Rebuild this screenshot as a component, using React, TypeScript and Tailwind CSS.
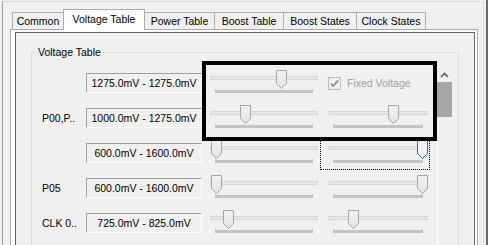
import React from 'react';

type Row = {
  label: string;
  range: string;
  a: number;
  b: number | null;
  focused?: boolean;
};

const rows: Row[] = [
  { label: '', range: '1275.0mV - 1275.0mV', a: 66, b: null },
  { label: 'P00,P..', range: '1000.0mV - 1275.0mV', a: 30, b: 60 },
  { label: '', range: '600.0mV - 1600.0mV', a: 1, b: 89, focused: true },
  { label: 'P05', range: '600.0mV - 1600.0mV', a: 1, b: 89 },
  { label: 'CLK 0..', range: '725.0mV - 825.0mV', a: 13, b: 20 },
];

const tabs = [
  { label: 'Common', w: 52 },
  { label: 'Voltage Table', w: 82, selected: true },
  { label: 'Power Table', w: 71 },
  { label: 'Boost Table', w: 70 },
  { label: 'Boost States', w: 74 },
  { label: 'Clock States', w: 70 },
];

function Thumb({ x, blue }: { x: number; blue?: boolean }) {
  return (
    <svg className="absolute top-0" style={{ left: x }} width="11" height="19" viewBox="0 0 11 19">
      <defs>
        <linearGradient id="thumbFill" x1="0" y1="0" x2="0" y2="1">
          <stop offset="0" stopColor="#f2f2f2" />
          <stop offset="1" stopColor="#e2e2e2" />
        </linearGradient>
      </defs>
      <path
        d="M0.5 0.5H10.5V13.5L5.5 18.5L0.5 13.5Z"
        fill={blue ? '#eef3f8' : 'url(#thumbFill)'}
        stroke={blue ? '#0078d7' : '#a6a6a6'}
      />
    </svg>
  );
}

function TrackBar({ width, pos, blue, className }: { width: number; pos: number; blue?: boolean; className: string }) {
  return (
    <div className={className} style={{ width }}>
      <div className="mt-[6px] h-[4px] border border-[#d6d6d6] bg-[#e7e7e7]" />
      <div className="mt-[9px] mx-[5px] h-[4px] flex items-end">
        <div className="w-[1px] h-[4px] bg-[#c4c4c4]" />
        <div className="flex-1 h-[3px] bg-[#c4c4c4]" />
        <div className="w-[1px] h-[4px] bg-[#c4c4c4]" />
      </div>
      <Thumb x={pos} blue={blue} />
    </div>
  );
}

function FixedVoltage() {
  return (
    <div className="ml-[10px] w-[100px] mt-[7px] flex items-center gap-[6px] text-[#a0a0a0] whitespace-nowrap">
      <svg width="13" height="13" viewBox="0 0 13 13">
        <rect x="0.5" y="0.5" width="12" height="12" fill="#f0f0f0" stroke="#bcbcbc" />
        <path d="M2.8 6.6L5.2 9.1L10.2 3.4" fill="none" stroke="#8c8c8c" strokeWidth="1.7" />
      </svg>
      <span className="leading-[13px]">Fixed Voltage</span>
    </div>
  );
}

export default function App() {
  return (
    <div className="relative w-[488px] h-[245px] overflow-hidden bg-[#f0f0f0] flex font-['Liberation_Sans',Arial,sans-serif] text-[10.5px] text-black">
      <div className="ml-[2px] mt-[1px] w-[482px] h-[260px] border-l border-t border-r border-l-[#a0a0a0] border-t-[#dcdcdc] border-r-[#dcdcdc] flex flex-col">
        <div className="ml-[7px] mt-[7px] w-[468px]">
          {/* tab strip */}
          <div className="ml-[2px] h-[20px] flex items-end">
            {tabs.map((t, i) =>
              t.selected ? (
                <div
                  key={t.label}
                  style={{ width: t.w }}
                  className="relative z-10 -ml-[1px] -mb-[1px] h-[21px] pb-[2px] border border-b-0 border-[#adadad] bg-white flex items-center justify-center whitespace-nowrap leading-none"
                >
                  {t.label}
                </div>
              ) : (
                <div
                  key={t.label}
                  style={{ width: t.w }}
                  className={
                    (i === 0 ? '' : '-ml-[1px] ') +
                    'h-[17px] border border-b-0 border-[#adadad] bg-[#f0f0f0] flex items-center justify-center whitespace-nowrap leading-none'
                  }
                >
                  {t.label}
                </div>
              )
            )}
          </div>

          {/* tab page */}
          <div className="border border-[#adadad] bg-white pt-[2px] pl-[4px] pr-[2px] h-[240px]">
            <div className="border border-[#646464] bg-[#f0f0f0] h-[236px] pt-[13px] pl-[15px]">
              <fieldset className="w-[428px] h-[220px] border border-[#dcdcdc] min-w-0">
                <legend className="ml-[4px] px-[2px] leading-[13px]">Voltage Table</legend>
                <div className="mt-[6px] w-[421px] flex">
                  <div className="w-[404px] pt-[5px] flex flex-col">
                    {rows.map((r, i) => (
                      <div key={i} className="h-[35px] pl-[10px] flex items-start">
                        <div className="w-[44px] h-[20px] mt-[3px] flex items-center whitespace-nowrap leading-none">
                          {r.label}
                        </div>
                        <div className="w-[116px] h-[20px] mt-[3px] border border-t-[#a0a0a0] border-l-[#a0a0a0] border-b-white border-r-white flex items-center justify-center whitespace-nowrap leading-none">
                          {r.range}
                        </div>
                        <TrackBar className="relative ml-[8px] h-[24px]" width={108} pos={r.a} />
                        {r.b === null ? (
                          <FixedVoltage />
                        ) : (
                          <TrackBar className="relative ml-[10px] h-[24px]" width={100} pos={r.b} blue={r.focused} />
                        )}
                      </div>
                    ))}
                  </div>
                  {/* scrollbar */}
                  <div className="w-[17px] flex flex-col">
                    <div className="h-[17px] pt-[2px] flex items-center justify-center">
                      <svg width="9" height="6" viewBox="0 0 9 6">
                        <path d="M1 5L4.5 1.5L8 5" fill="none" stroke="#606060" strokeWidth="1.6" />
                      </svg>
                    </div>
                    <div className="mx-[1px] h-[35px] bg-[#a6a6a6]" />
                    <div className="flex-1 ml-[1px] border-l border-white" />
                  </div>
                </div>
              </fieldset>
            </div>
          </div>
        </div>
      </div>
      <div className="ml-[2px] w-[2px] bg-[#696969]" />

      {/* focus rectangle of the selected trackbar */}
      <div className="absolute left-[320px] top-[138px] w-[110px] h-[32px] border border-dotted border-black pointer-events-none" />
      {/* highlight annotation */}
      <div className="absolute left-[202px] top-[61px] w-[235px] h-[80px] border-4 border-black pointer-events-none" />
    </div>
  );
}
